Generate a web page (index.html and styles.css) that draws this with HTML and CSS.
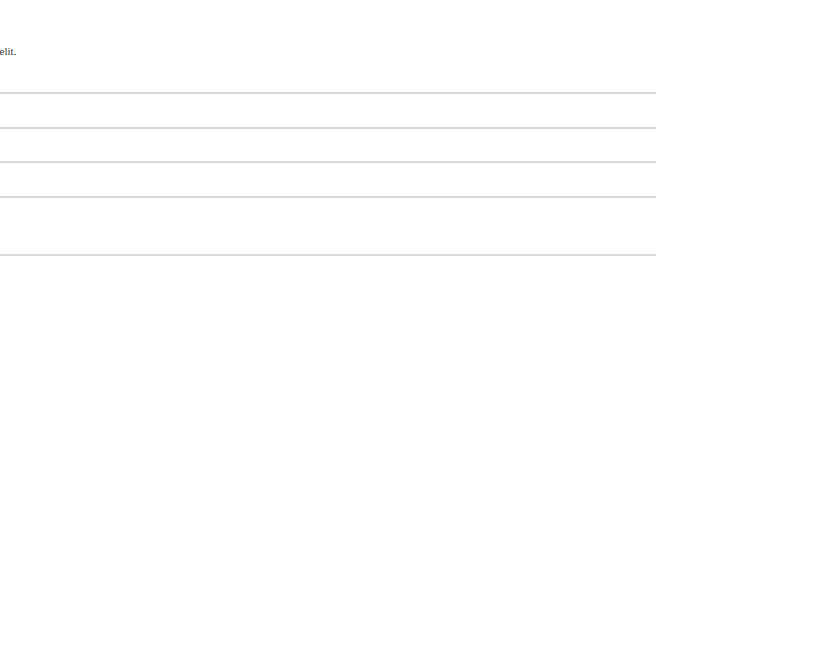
FILE: index.html
```html
<!DOCTYPE html>
<html lang="en">
<head>
    <meta charset="UTF-8">
    <meta name="viewport" content="width=device-width, initial-scale=1.0">
    <title>Rows</title>
    <link rel="stylesheet" href="styles.css">
</head>
<body>
    <div class="page">
        <p class="intro">Lorem ipsum dolor sit amet, consectetur adipiscing elit.</p>

        <div class="rows">
            <div class="row"></div>
            <div class="row"></div>
            <div class="row"></div>
            <div class="row tall"></div>
        </div>
    </div>
</body>
</html>
```

FILE: styles.css
```css
body {
    margin: 0;
    overflow: hidden;
    background-color: #fff;
    font-family: "Liberation Serif", "Times New Roman", serif;
    color: #333;
}
.page {
    width: 885px;
    margin-left: -229px;
    padding-top: 44px;
}
.intro {
    margin: 0;
    font-size: 11px;
    line-height: 14px;
}
.rows {
    margin-top: 34px;
}
.row {
    height: 32.5px;
    border-top: 2px solid #d9d9d9;
}
.row.tall {
    height: 56px;
    border-bottom: 2px solid #d9d9d9;
}
```
